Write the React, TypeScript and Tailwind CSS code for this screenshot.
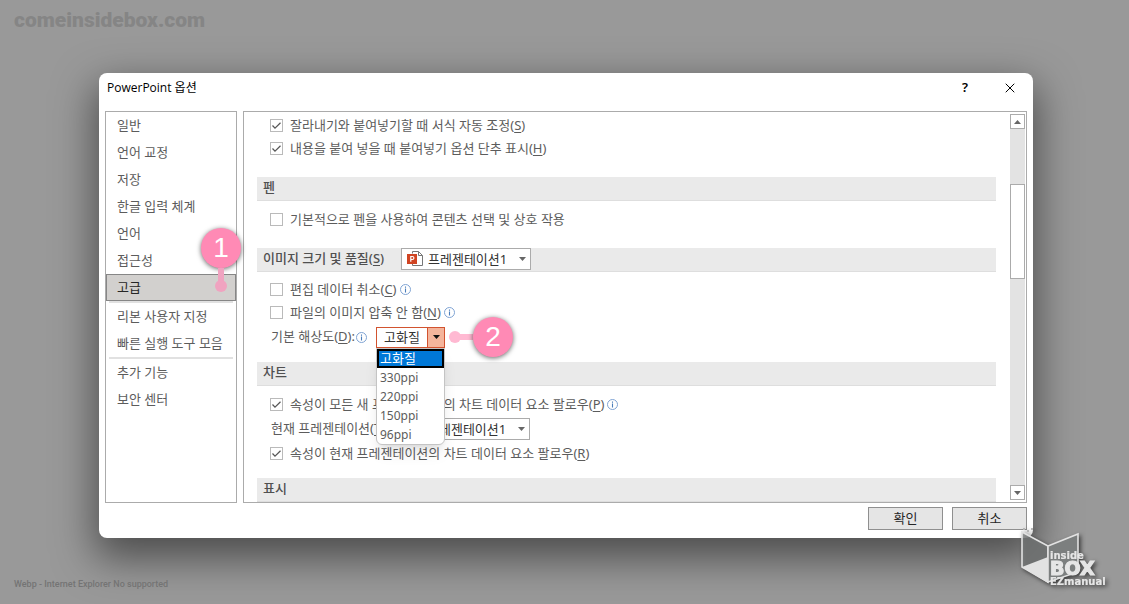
import React, { useState } from 'react';
import { X } from 'lucide-react';

const NAV_GROUPS = [
  ['일반', '언어 교정', '저장', '한글 입력 체계', '언어', '접근성', '고급'],
  ['리본 사용자 지정', '빠른 실행 도구 모음'],
  ['추가 기능', '보안 센터'],
];

const RESOLUTIONS = ['고화질', '330ppi', '220ppi', '150ppi', '96ppi'];

function InfoIcon() {
  return (
    <svg viewBox="0 0 11 11" className="w-[11px] h-[11px] shrink-0" fill="none">
      <circle cx="5.5" cy="5.5" r="5" stroke="#7fa3d3" />
      <path d="M5.5 4.6V8.4M5.5 2.6V3.7" stroke="#4a7ebb" strokeWidth="1.1" />
    </svg>
  );
}

function HotKey({ k }: { k: string }) {
  return (
    <>
      (<span className="underline underline-offset-2">{k}</span>)
    </>
  );
}

function CheckRow({ text, hotKey, checked = false, info = false }: { text: string; hotKey?: string; checked?: boolean; info?: boolean }) {
  return (
    <div className="flex items-center h-[23px] pl-[13px]">
      <label className="flex items-center gap-[7px] whitespace-nowrap">
        <span className="relative w-[13px] h-[13px] shrink-0">
          <input
            type="checkbox"
            defaultChecked={checked}
            className="peer block appearance-none w-[13px] h-[13px] border border-[#bababa] bg-white"
          />
          <svg viewBox="0 0 13 13" fill="none" className="absolute inset-0 hidden peer-checked:block pointer-events-none">
            <path d="M2.5 6.5L5 9.2L10.5 3.8" stroke="#555" strokeWidth="1.2" />
          </svg>
        </span>
        <span>
          {text}
          {hotKey && <HotKey k={hotKey} />}
        </span>
      </label>
      {info && <span className="ml-[3px]"><InfoIcon /></span>}
    </div>
  );
}

function SectionBar({ children }: { children: React.ReactNode }) {
  return (
    <h2 className="flex items-start h-6 pl-1.5 bg-[#eaeaea] border-b border-[#dedede] font-medium leading-[20px] text-[#505050] whitespace-nowrap">
      {children}
    </h2>
  );
}

function PresentationSelect({ label }: { label: string }) {
  return (
    <div className="relative w-[130px] h-[22px] font-normal">
      <select
        aria-label={label}
        className="block appearance-none w-full h-full pl-[26px] border border-[#ababab] bg-white text-[13px] leading-[20px] text-[#333]"
      >
        <option>프레젠테이션1</option>
      </select>
      <svg viewBox="0 0 17 17" fill="none" className="absolute left-[6px] top-[2px] w-[17px] h-[17px] pointer-events-none">
        <path d="M5.5 3.5V1.5H11.5L15.5 5.5V15.5H5.5V14" fill="#fff" stroke="#777" />
        <path d="M11.5 1.5V5.5H15.5" stroke="#777" />
        <rect x="0" y="4" width="10" height="10" fill="#d04423" />
        <path d="M3.8 11.8V6.5H5.4A1.5 1.5 0 0 1 5.4 9.5H3.8" stroke="#fff" strokeWidth="1.2" />
      </svg>
      <svg viewBox="0 0 7 4" className="absolute right-[5px] top-[9px] w-[7px] h-[4px] pointer-events-none">
        <path d="M0 0H7L3.5 4Z" fill="#666" />
      </svg>
    </div>
  );
}

function ResolutionPicker() {
  const [value, setValue] = useState(RESOLUTIONS[0]);

  return (
    <div className="relative w-[69px] h-[21px]">
      <button
        id="resolution"
        aria-haspopup="listbox"
        className="flex w-full h-full border border-[#d2532f] bg-white text-[13px] leading-[19px] text-[#333]"
      >
        <span className="flex-1">{value}</span>
        <span className="flex items-center justify-center w-[17px] h-full border-l border-[#d2532f] bg-[#f4b59c]">
          <svg viewBox="0 0 7 4" className="w-[7px] h-[4px]">
            <path d="M0 0H7L3.5 4Z" fill="#111" />
          </svg>
        </span>
      </button>
      <ul
        role="listbox"
        className="absolute z-10 left-0 top-full w-[69px] border border-[#c4c4c4] rounded-b-md bg-white shadow-lg"
      >
        {RESOLUTIONS.map((item) => (
          <li
            key={item}
            role="option"
            aria-selected={item === value}
            onClick={() => setValue(item)}
            className={
              item === value
                ? 'h-[19px] pl-px border-2 border-black bg-[#0078d7] text-white leading-[15px]'
                : 'h-[19px] pl-[3px] text-xs leading-[19px]'
            }
          >
            {item}
          </li>
        ))}
      </ul>
      {/* Step 2 marker */}
      <div className="absolute left-[73px] top-1/2 -translate-y-1/2 flex items-center pointer-events-none">
        <span className="w-3 h-3 rounded-full bg-[#ffb9d2]" />
        <span className="w-4 h-1.5 -ml-1 bg-[#ffb9d2]" />
        <StepBadge n={2} />
      </div>
    </div>
  );
}

function StepBadge({ n }: { n: number }) {
  return (
    <span className="flex items-center justify-center w-10 h-10 rounded-full bg-[#ff8ab5] text-white text-[28px] font-normal leading-none shadow-[0_1px_5px_rgba(0,0,0,0.6)] [font-family:'Liberation_Sans',sans-serif]">
      {n}
    </span>
  );
}

function Sidebar() {
  const [active, setActive] = useState('고급');

  return (
    <nav className="w-[132px] shrink-0 border border-[#ababab]">
      {NAV_GROUPS.map((group, i) => (
        <div key={i}>
          {i > 0 && <hr className="h-0.5 mx-[3px] border-0 bg-[#e1e1e1]" />}
          {group.map((item) => (
            <button
              key={item}
              onClick={() => setActive(item)}
              className={
                item === active
                  ? 'relative block w-full h-[27px] pl-[10px] text-left border border-[#868686] bg-[#d2d0ce] text-[#262626]'
                  : 'block w-full h-[27px] pl-[11px] text-left whitespace-nowrap'
              }
            >
              {item}
              {item === active && (
                <span className="absolute right-[-6px] bottom-2 flex flex-col items-center">
                  <StepBadge n={1} />
                  <span className="w-1.5 h-4 bg-[#f0a3c0]" />
                  <span className="w-3 h-3 -mt-1 rounded-full bg-[#f0a3c0]" />
                </span>
              )}
            </button>
          ))}
        </div>
      ))}
    </nav>
  );
}

function ScrollBar() {
  return (
    <div className="flex flex-col w-[15px] my-0.5 mr-px ml-3.5 shrink-0 bg-[#e3e3e3]">
      <button aria-label="위로" className="flex items-center justify-center h-[15px] border border-[#ababab] bg-white">
        <svg viewBox="0 0 7 4" className="w-[7px] h-[4px]"><path d="M0 4H7L3.5 0Z" fill="#666" /></svg>
      </button>
      <div className="flex-1">
        <div className="h-[95px] mt-[55px] border border-[#ababab] bg-white" />
      </div>
      <button aria-label="아래로" className="flex items-center justify-center h-[15px] border border-[#ababab] bg-white">
        <svg viewBox="0 0 7 4" className="w-[7px] h-[4px]"><path d="M0 0H7L3.5 4Z" fill="#666" /></svg>
      </button>
    </div>
  );
}

function BoxLogo() {
  return (
    <svg viewBox="0 0 96 68" className="absolute right-[14px] bottom-[10px] w-[96px] h-[68px] drop-shadow-[2px_2px_2px_rgba(0,0,0,0.6)]">
      <path d="M3 6L29 20V56L3 41Z" fill="#7c7f7f" fillOpacity="0.75" stroke="#e2e2e2" strokeWidth="1.6" />
      <path d="M29 20L59 8V46L29 56Z" fill="#7c7f7f" stroke="#e2e2e2" strokeWidth="1.6" />
      <path d="M3 41L29 31V57Z" fill="#e2e2e2" />
      <path d="M4 2h2v2h-2zM8 4h2v2h-2zM12 2h2v2h-2z" fill="#b5b5b5" />
      <g fill="#e6e6e6" stroke="#e6e6e6" fontFamily="'DejaVu Sans', sans-serif" fontWeight="bold">
        <text x="31" y="33" fontSize="10" strokeWidth="0.2">inside</text>
        <text x="31" y="49" fontSize="19" strokeWidth="1.2">BOX</text>
        <text x="31" y="59" fontSize="10" strokeWidth="0.2">EZmanual</text>
      </g>
    </svg>
  );
}

export default function App() {
  return (
    <div className="relative flex flex-col min-h-screen bg-[#999] text-[13px] text-[#5c5c5c] [font-family:'Noto_Sans','Noto_Sans_CJK_KR',sans-serif]">
      <header className="h-[73px] pl-3.5 pt-2 text-[21px] leading-6 font-black text-[#858585] [font-family:Roboto,sans-serif]">
        comeinsidebox.com
      </header>

      <main className="ml-[99px] mr-24 rounded-lg bg-white shadow-[0_16px_40px_4px_rgba(0,0,0,0.5)]">
        <div className="flex items-center h-[38px] pl-2 pr-[15px] pb-2 text-black">
          <h1 className="flex-1 text-xs [font-family:'Open_Sans','Noto_Sans_CJK_KR',sans-serif]">PowerPoint 옵션</h1>
          <button aria-label="도움말" className="w-4 mr-[29px] font-semibold">?</button>
          <button aria-label="닫기"><X className="w-4 h-4" strokeWidth={1.5} /></button>
        </div>

        <div className="flex gap-1.5 px-1.5">
          <Sidebar />

          <div className="flex flex-1 min-w-0 border border-[#ababab]">
            <div className="flex-1 min-w-0 pl-[13px]">
              <section className="pt-0.5 pb-[17px]">
                <CheckRow text="잘라내기와 붙여넣기할 때 서식 자동 조정" hotKey="S" checked />
                <CheckRow text="내용을 붙여 넣을 때 붙여넣기 옵션 단추 표시" hotKey="H" checked />
              </section>

              <SectionBar>펜</SectionBar>
              <section className="pt-[7px] pb-[17px]">
                <CheckRow text="기본적으로 펜을 사용하여 콘텐츠 선택 및 상호 작용" />
              </section>

              <SectionBar>
                <span className="w-[138px]">이미지 크기 및 품질<HotKey k="S" /></span>
                <PresentationSelect label="이미지 크기 및 품질" />
              </SectionBar>
              <section className="pt-1.5 pb-3">
                <CheckRow text="편집 데이터 취소" hotKey="C" info />
                <CheckRow text="파일의 이미지 압축 안 함" hotKey="N" info />
                <div className="flex items-center h-[26px] pl-3.5">
                  <div className="flex items-center w-[105px] gap-px whitespace-nowrap">
                    <label htmlFor="resolution">기본 해상도<HotKey k="D" />:</label>
                    <InfoIcon />
                  </div>
                  <ResolutionPicker />
                </div>
              </section>

              <SectionBar>차트</SectionBar>
              <section className="pt-[7px] pb-[13px]">
                <CheckRow text="속성이 모든 새 프레젠테이션의 차트 데이터 요소 팔로우" hotKey="P" checked info />
                <div className="flex items-center h-[26px] pl-3.5">
                  <span className="w-[129px] whitespace-nowrap">현재 프레젠테이션<HotKey k="T" />:</span>
                  <PresentationSelect label="현재 프레젠테이션" />
                </div>
                <CheckRow text="속성이 현재 프레젠테이션의 차트 데이터 요소 팔로우" hotKey="R" checked />
              </section>

              <SectionBar>표시</SectionBar>
            </div>
            <ScrollBar />
          </div>
        </div>

        <div className="flex justify-end gap-[9px] px-1.5 pt-1 pb-2 text-[#262626]">
          <button className="w-[75px] h-[23px] border border-[#8f8f8f] bg-[#e5e5e5]">확인</button>
          <button className="w-[75px] h-[23px] border border-[#8f8f8f] bg-[#e5e5e5]">취소</button>
        </div>
      </main>

      <footer className="pl-3.5 pt-[38px] text-[9px] leading-4 font-medium text-[#747474] [font-family:Roboto,sans-serif]">
        Webp - Internet Explorer No supported
      </footer>
      <BoxLogo />
    </div>
  );
}
